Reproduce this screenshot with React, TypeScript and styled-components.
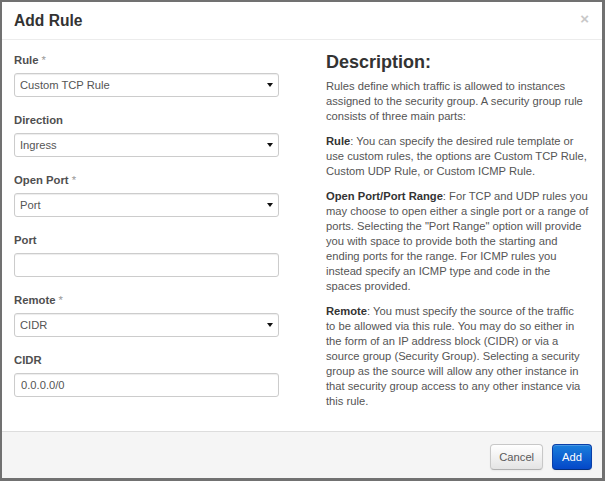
import React from "react";
import styled, { createGlobalStyle } from "styled-components";

const GlobalStyle = createGlobalStyle`
  html, body {
    margin: 0;
    padding: 0;
    background: #717171;
    font-family: "Liberation Sans", Arial, Helvetica, sans-serif;
  }
  * { box-sizing: border-box; }
`;

const Frame = styled.div`
  width: 605px;
  height: 481px;
  padding: 2px 3px 3px 2px;
  background: #717171;
`;

const Modal = styled.div`
  width: 600px;
  height: 476px;
  background: #ffffff;
  display: flex;
  flex-direction: column;
`;

const Header = styled.div`
  height: 38px;
  flex: none;
  border-bottom: 1px solid #ececec;
  display: flex;
  align-items: center;
  justify-content: space-between;
  padding: 0 13px 0 12px;
`;

const Title = styled.h3`
  margin: 0;
  font-size: 15.6px;
  line-height: 37px;
  font-weight: bold;
  color: #333333;
`;

const Close = styled.button`
  border: 0;
  background: none;
  padding: 0;
  margin-top: -5px;
  font-family: "Liberation Sans", Arial, sans-serif;
  font-size: 15px;
  font-weight: bold;
  line-height: 1;
  color: #c8c8c8;
  cursor: pointer;
`;

const Body = styled.div`
  flex: 1;
  display: flex;
  gap: 47px;
  padding: 12px 12px 0 12px;
`;

const FormColumn = styled.div`
  width: 265px;
  flex: none;
  display: flex;
  flex-direction: column;
  gap: 15px;
`;

const Group = styled.div`
  display: flex;
  flex-direction: column;
  gap: 5px;
`;

const Label = styled.label`
  font-size: 11.3px;
  line-height: 16px;
  font-weight: bold;
  color: #4f4f4f;
`;

const Required = styled.span`
  font-weight: normal;
  color: #9a9a9a;
`;

const fieldBase = `
  width: 100%;
  height: 24px;
  border: 1px solid #cccccc;
  border-radius: 3px;
  background: #ffffff;
  box-shadow: inset 0 1px 1px rgba(0, 0, 0, 0.075);
  padding: 0 6px;
  font-family: "Liberation Sans", Arial, sans-serif;
  font-size: 11.2px;
  color: #555555;
  outline: none;
`;

const SelectWrap = styled.div`
  position: relative;
  &::after {
    content: "";
    position: absolute;
    right: 6px;
    top: 10px;
    border-left: 3px solid transparent;
    border-right: 3px solid transparent;
    border-top: 4px solid #111111;
    pointer-events: none;
  }
`;

const Select = styled.select`
  ${fieldBase}
  appearance: none;
  -webkit-appearance: none;
  padding-left: 5px;
`;

const Input = styled.input`
  ${fieldBase}
`;

const DescColumn = styled.div`
  flex: 1;
  color: #555555;
  font-size: 11.2px;
  line-height: 15px;
`;

const DescTitle = styled.h3`
  margin: 0 0 7px 0;
  font-size: 18px;
  line-height: 20px;
  font-weight: bold;
  color: #333333;
`;

const Para = styled.p`
  margin: 0 0 10px 0;
  white-space: nowrap;
`;

const Term = styled.strong`
  color: #333333;
`;

const Footer = styled.div`
  height: 47px;
  flex: none;
  background: #f5f5f5;
  border-top: 1px solid #dddddd;
  display: flex;
  justify-content: flex-end;
  align-items: flex-start;
  gap: 9px;
  padding: 12px 10px 0 0;
`;

const Button = styled.button<{ $primary?: boolean }>`
  height: 26px;
  padding: 0 ${(p) => (p.$primary ? "9px" : "8px")};
  border-radius: 4px;
  font-family: "Liberation Sans", Arial, sans-serif;
  font-size: 11.2px;
  cursor: pointer;
  border: 1px solid ${(p) => (p.$primary ? "#0a3fa8" : "#c8c8c8")};
  border-bottom-color: ${(p) => (p.$primary ? "#06307f" : "#b0b0b0")};
  color: ${(p) => (p.$primary ? "#ffffff" : "#5a5a5a")};
  background: ${(p) =>
    p.$primary
      ? "linear-gradient(#1a7fdc, #0447c8)"
      : "linear-gradient(#ffffff, #e4e4e4)"};
  box-shadow: inset 0 1px 0 rgba(255, 255, 255, 0.2), 0 1px 2px rgba(0, 0, 0, 0.05);
`;

type Field = {
  label: string;
  required?: boolean;
  kind: "select" | "input";
  value: string;
};

const fields: Field[] = [
  { label: "Rule", required: true, kind: "select", value: "Custom TCP Rule" },
  { label: "Direction", kind: "select", value: "Ingress" },
  { label: "Open Port", required: true, kind: "select", value: "Port" },
  { label: "Port", kind: "input", value: "" },
  { label: "Remote", required: true, kind: "select", value: "CIDR" },
  { label: "CIDR", kind: "input", value: "0.0.0.0/0" },
];

export default function App() {
  return (
    <>
      <GlobalStyle />
      <Frame>
        <Modal>
          <Header>
            <Title>Add Rule</Title>
            <Close aria-label="Close">×</Close>
          </Header>
          <Body>
            <FormColumn>
              {fields.map((f) => (
                <Group key={f.label}>
                  <Label>
                    {f.label}
                    {f.required && <Required> *</Required>}
                  </Label>
                  {f.kind === "select" ? (
                    <SelectWrap>
                      <Select defaultValue={f.value}>
                        <option>{f.value}</option>
                      </Select>
                    </SelectWrap>
                  ) : (
                    <Input defaultValue={f.value} />
                  )}
                </Group>
              ))}
            </FormColumn>
            <DescColumn>
              <DescTitle>Description:</DescTitle>
              <Para>
                Rules define which traffic is allowed to instances
                <br />
                assigned to the security group. A security group rule
                <br />
                consists of three main parts:
              </Para>
              <Para>
                <Term>Rule</Term>: You can specify the desired rule template or
                <br />
                use custom rules, the options are Custom TCP Rule,
                <br />
                Custom UDP Rule, or Custom ICMP Rule.
              </Para>
              <Para>
                <Term>Open Port/Port Range</Term>: For TCP and UDP rules you
                <br />
                may choose to open either a single port or a range of
                <br />
                ports. Selecting the "Port Range" option will provide
                <br />
                you with space to provide both the starting and
                <br />
                ending ports for the range. For ICMP rules you
                <br />
                instead specify an ICMP type and code in the
                <br />
                spaces provided.
              </Para>
              <Para>
                <Term>Remote</Term>: You must specify the source of the traffic
                <br />
                to be allowed via this rule. You may do so either in
                <br />
                the form of an IP address block (CIDR) or via a
                <br />
                source group (Security Group). Selecting a security
                <br />
                group as the source will allow any other instance in
                <br />
                that security group access to any other instance via
                <br />
                this rule.
              </Para>
            </DescColumn>
          </Body>
          <Footer>
            <Button>Cancel</Button>
            <Button $primary>Add</Button>
          </Footer>
        </Modal>
      </Frame>
    </>
  );
}
